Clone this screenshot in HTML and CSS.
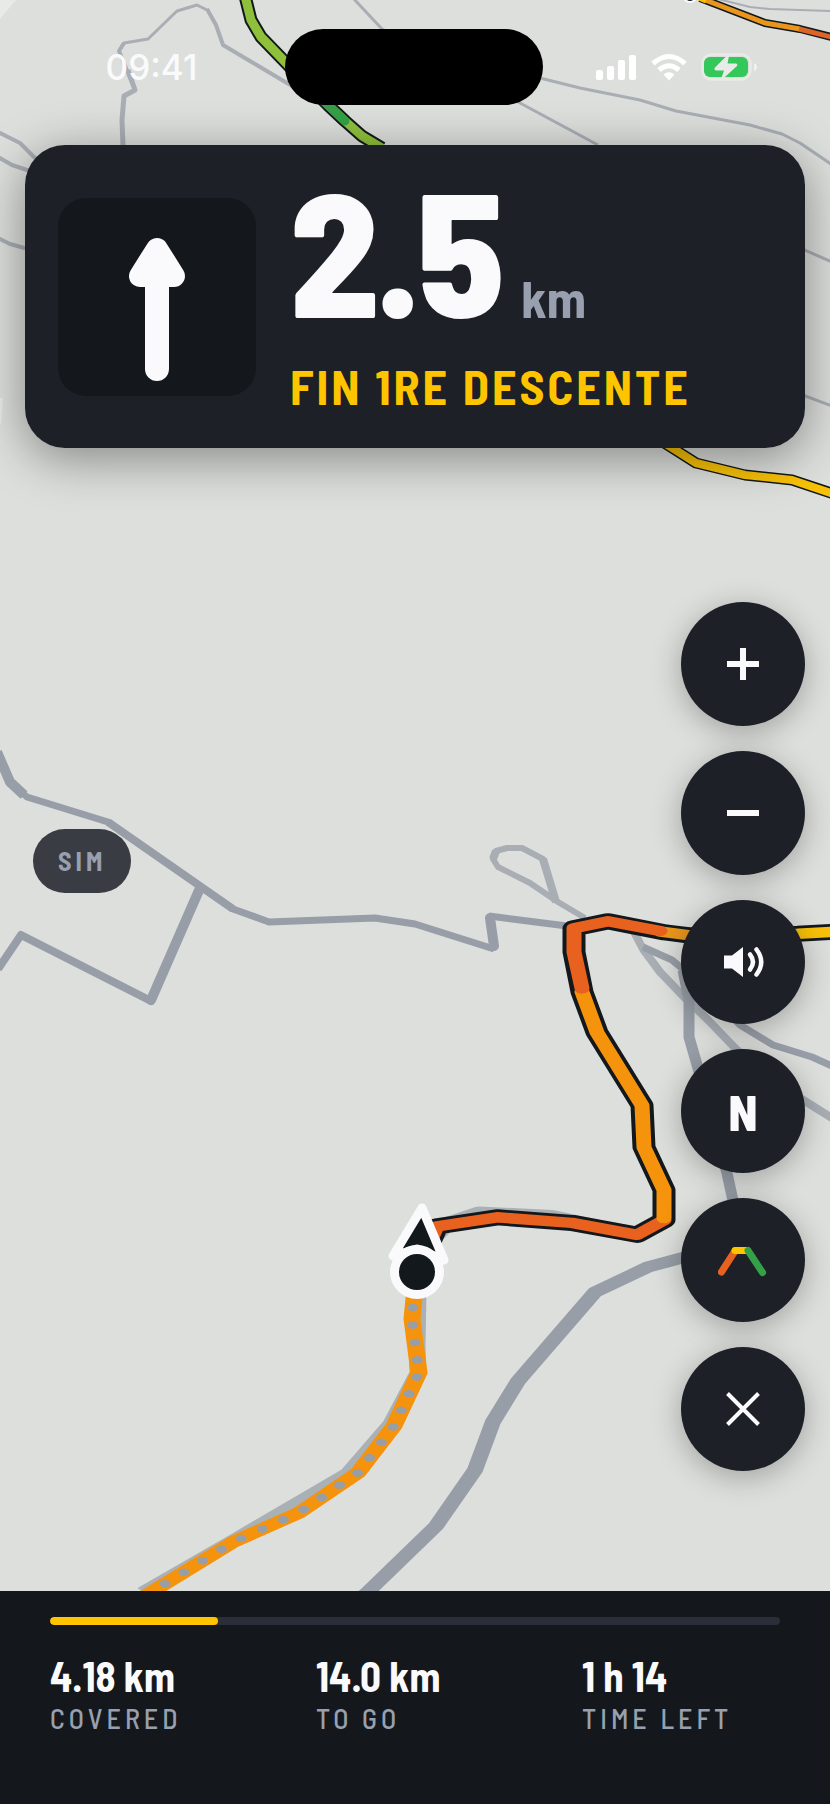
FILE: index.html
```html
<!DOCTYPE html>
<html lang="en">
<head>
<meta charset="utf-8">
<meta name="viewport" content="width=device-width, initial-scale=1">
<title>Navigation</title>
<link rel="stylesheet" href="styles.css">
</head>
<body>
<main class="screen">
  <section class="stage">
    <svg class="map" viewBox="0 0 830 1591" preserveAspectRatio="xMidYMax slice" aria-hidden="true">
      <path class="haze" d="M0 0H16L0 19ZM0 398L3 398L1 424L0 424Z"/>
      <g class="road road-light">
        <path stroke-width="5" d="M123 146L122 120L124 96L135 90L128 70"/>
        <path stroke-width="4" d="M135 90L119 51L124 43"/>
        <path stroke-width="3" d="M119 51L124 43L148 39L177 11L197 5L209 11"/>
        <path stroke-width="4" d="M207 9L216 25L223 45L292 86"/>
        <path stroke-width="3" d="M353 -2L382 29L520 103L598 145M540 78L580 88L640 100L676 111L750 125L782 134L800 143L831 164"/>
        <path stroke-width="2" d="M718 -1L750 7L770 9L830 11"/>
        <path stroke-width="4" d="M-2 132L20 143L36 159M-2 157L12 165L30 171M-2 238L10 244L28 249"/>
        <path stroke-width="3" d="M800 248L832 262M800 394L832 406"/>
        <path stroke-width="6" d="M585 918L558 902L530 883L498 867L493 859L496 851L507 848L522 848L543 859L556 902"/>
        <path stroke-width="8" d="M493 859L496 851M543 859L556 902"/>
        <path stroke-width="8" d="M632 928L643 949L660 972L685 998L708 1020L737 1050L800 1098L832 1118"/>
      </g>
      <g class="road">
        <path stroke-width="10" d="M-3 752L10 782L24 795"/>
        <path stroke-width="7" d="M10 782L27 797L108 822L233 909L269 922L375 918L415 924L494 949"/>
        <path stroke-width="8" d="M108 822L233 909M200 888L151 1001L21 935L-2 969"/>
        <path stroke-width="10" stroke-linecap="round" d="M200 888L151 1000M494 946L490 918"/>
        <path stroke-width="7" d="M489 916L575 927M643 947L672 960L684 970L740 1025L773 1045L812 1057L832 1066"/>
        <path stroke-width="11" d="M683 970L689 1000L689 1037L710 1110L727 1173L735 1210"/>
      </g>
      <!-- the ground plane is tilted, so strokes are flattened vertically -->
      <g class="tilt" transform="scale(1 .7)">
        <path class="road" stroke-width="16" d="M690 1794L648 1810L595 1846L518 1973L493 2031L475 2100L436 2180L368 2274L350 2295"/>
        <path class="road road-pale" stroke-width="17" d="M418 1840L417 1925L418 1961L391 2034L348 2105L233 2201L143 2275"/>
        <path class="road road-pale" stroke-width="17" d="M430 1774L450 1746L479 1732L552 1737L600 1752"/>
        <path class="covered" d="M415 1840L412 1884L419 1961L394 2037L358 2104L299 2161L233 2203L152 2274L120 2303"/>
        <path class="dots" d="M413 1868L412 1884L419 1961L394 2037L358 2104L299 2161L233 2203L152 2274L120 2303"/>
        <path class="casing" d="M425 1790L437 1752L497 1739L572 1747L637 1764L664 1743L664 1700L644 1639L642 1579L597 1475L582 1417L574 1360L574 1326L608 1316L665 1332L688 1336L798 1334L835 1331"/>
        <path class="ride red" d="M425 1790L437 1752L497 1739L572 1747L637 1764L664 1743"/>
        <path class="ride orange" d="M664 1740L664 1700L644 1639L642 1579L597 1475L582 1417"/>
        <path class="ride amber" d="M661 1331L688 1336L740 1336"/>
        <path class="ride yellow" d="M740 1336L798 1334L835 1331"/>
        <path class="ride red" d="M582 1412L574 1360L574 1326L608 1316L660 1330"/>
      </g>
      <g class="far">
        <path class="edge" stroke-width="13" d="M245 -4L251 20L261 37L292 69L328 105L345 121L362 136L382 148"/>
        <path class="lime" stroke-width="9" d="M245 -4L251 20L261 37L292 69L328 105L345 121L362 136L382 148"/>
        <path class="green" stroke-width="9" d="M296 73L328 105L345 121"/>
        <path class="edge" stroke-width="11" d="M655 437L696 463L745 475L792 480L834 494"/>
        <path class="yellow" stroke-width="8" d="M655 437L696 463L745 475L792 480L834 494"/>
        <path class="edge" stroke-width="8" d="M700 -2L765 23L800 29L835 38"/>
        <path class="amber" stroke-width="5" d="M700 -2L765 23L800 29"/>
        <path class="yellow" stroke-width="5" d="M699 -2L706 1"/>
        <path class="rust" stroke-width="5" d="M799 29L835 38"/>
      </g>
      <circle class="marker-ring" cx="690" cy="-5" r="8"/>
      <circle class="marker-core" cx="690" cy="-4" r="5"/>
      <path class="heading" d="M422 1208L393 1256L417 1249L444 1260Z"/>
      <circle class="marker-ring" cx="417" cy="1272" r="27"/>
      <circle class="marker-core" cx="417" cy="1272" r="18"/>
    </svg>

    <header class="status">
      <time class="clock">09:41</time>
      <span class="island"></span>
      <span class="indicators">
        <svg width="41" height="28" viewBox="0 0 41 28" role="img" aria-label="Signal"><g fill="#fff"><rect x="0" y="17" width="7" height="10" rx="2"/><rect x="11" y="13" width="7" height="14" rx="2"/><rect x="22" y="7" width="7" height="20" rx="2"/><rect x="33" y="2" width="7" height="25" rx="2"/></g></svg>
        <svg width="36" height="28" viewBox="0 0 36 28" role="img" aria-label="Wi-Fi"><g fill="none" stroke="#fff" stroke-width="5"><path d="M2 10.500Q18 -3.500 34 10.500"/><path d="M8 17Q18 8.500 28 17"/></g><path fill="#fff" d="M12.500 21.500Q18 17 23.500 21.500L18 27.500Z"/></svg>
        <svg width="56" height="28" viewBox="0 0 56 28" role="img" aria-label="Battery charging"><rect x="1.500" y="1.500" width="48" height="25" rx="9" fill="none" stroke="#e9ebe8" stroke-width="2.500"/><rect x="3" y="4" width="44" height="20" rx="6" fill="#34c759"/><path d="M53 10Q56 11 56 14Q56 17 53 18Z" fill="#f0f2ef"/><path d="M28.500 0L13.500 15Q13 17 15 17.500H23L19.500 28L36 13Q37 11 35 10.500H26.500Z" fill="#e9ebe8"/></svg>
      </span>
    </header>

    <section class="turn">
      <span class="turn-tile">
        <svg viewBox="0 0 198 198" role="img" aria-label="Continue straight"><path d="M99 51L82 78H116Z" fill="#fafafc" stroke="#fafafc" stroke-width="22" stroke-linejoin="round"/><path d="M99 70V171" stroke="#fafafc" stroke-width="24" stroke-linecap="round"/></svg>
      </span>
      <div class="turn-text">
        <p class="distance"><strong>2.5</strong><span>km</span></p>
        <h1 class="instruction">FIN 1RE DESCENTE</h1>
      </div>
    </section>

    <div class="tools">
      <span class="sim">SIM</span>
      <nav class="controls" aria-label="Map controls">
        <button type="button" aria-label="Zoom in"><svg viewBox="0 0 50 50"><path d="M9 25H41M25 9V41" stroke="#fafafc" stroke-width="6"/></svg></button>
        <button type="button" aria-label="Zoom out"><svg viewBox="0 0 50 50"><path d="M9 25H41" stroke="#fafafc" stroke-width="6"/></svg></button>
        <button type="button" aria-label="Sound"><svg viewBox="0 0 50 50"><path d="M6 18.500H14L25 10V40L14 31.500H6Z" fill="#fafafc"/><g fill="none" stroke="#fafafc" stroke-width="4.500" stroke-linecap="round"><path d="M32 17.500Q38 25 32 32.500"/><path d="M38.500 12.500Q48 25 38.500 37.500"/></g></svg></button>
        <button type="button">N</button>
        <button type="button" aria-label="Slope colours"><svg viewBox="0 0 50 50" fill="none" stroke-width="7" stroke-linecap="round"><path d="M3.500 37L17 16" stroke="#e8611e"/><path d="M17 15.500H29" stroke="#ffc400"/><path d="M30 15.500L44.500 37.500" stroke="#34a047"/></svg></button>
        <button type="button" aria-label="Close"><svg viewBox="0 0 50 50"><path d="M9.500 9.500L40.500 40.500M40.500 9.500L9.500 40.500" stroke="#fafafc" stroke-width="4"/></svg></button>
      </nav>
    </div>
  </section>

  <footer class="trip">
    <progress value="23" max="100" aria-label="Route covered"></progress>
    <dl class="stats">
      <div><dt>COVERED</dt><dd>4.18 km</dd></div>
      <div><dt>TO GO</dt><dd>14.0 km</dd></div>
      <div><dt>TIME LEFT</dt><dd>1 h 14</dd></div>
    </dl>
  </footer>
</main>
</body>
</html>
```
FILE: styles.css
```css
:root {
  --ink: #14181c;
  --panel: #1e2028;
  --text: #fafafc;
  --muted: #98a0af;
  --yellow: #ffc400;
  --land: #dddfdc;
  --road: #989ea7;
}
* { box-sizing: border-box; }
body {
  margin: 0;
  background: var(--ink);
  color: var(--text);
  font-family: "Barlow Semi Condensed", "Barlow Condensed", Roboto, sans-serif;
}
p, h1, dl, dd { margin: 0; }

.screen { display: flex; flex-direction: column; min-height: 100vh; }
.stage {
  position: relative;
  isolation: isolate;
  flex: 1;
  display: flex;
  flex-direction: column;
  overflow: hidden;
  background: var(--land);
}

.map { position: absolute; inset: 0; z-index: -1; width: 100%; height: 100%; }
.map path { stroke-linejoin: round; }
.map .haze { fill: #e8eae8; }
.road { fill: none; stroke: var(--road); }
.road-light { stroke: #a8aeb4; }
.road-pale { stroke: #aab1b6; }
.covered { fill: none; stroke: #f5940c; stroke-width: 17; }
.dots { fill: none; stroke: #989ea7; stroke-width: 11; stroke-linecap: round; stroke-dasharray: 0 25; }
.casing { fill: none; stroke: #12181b; stroke-width: 23; }
.ride { fill: none; stroke-width: 15; stroke-linecap: round; }
.far path { fill: none; }
.edge { stroke: #12181b; }
.red { stroke: #e8611e; }
.rust { stroke: #dc6428; }
.orange { stroke: #f5940c; }
.amber { stroke: #ea961c; }
.yellow { stroke: #f8c108; }
.lime { stroke: #8fc03c; }
.green { stroke: #34a047; stroke-linecap: round; }
.marker-ring { fill: var(--text); }
.marker-core { fill: #12181b; }
.heading { fill: #12181b; stroke: var(--text); stroke-width: 9; }

.status {
  display: grid;
  grid-template-columns: 1fr 258px 1fr;
  align-items: center;
  padding: 29px 20px 0 18px;
}
.clock { justify-self: center; font: 500 35px/40px Inter, sans-serif; }
.island { height: 76px; border-radius: 38px; background: #000; }
.indicators { display: flex; gap: 14px; justify-self: center; }

.turn {
  display: flex;
  align-items: center;
  gap: 34px;
  min-height: 303px;
  margin: 40px 25px 0;
  padding: 20px 33px;
  border-radius: 40px;
  background: var(--panel);
  box-shadow: 0 10px 50px rgba(0, 0, 0, .4);
}
.turn-tile { flex: none; width: 198px; height: 198px; border-radius: 28px; background: var(--ink); }
.turn-tile svg { display: block; }
.turn-text { padding-bottom: 12px; }
.distance { display: flex; align-items: baseline; gap: 20px; }
.distance strong { font-size: 175px; line-height: 160px; font-weight: 800; letter-spacing: -3px; }
.distance span { color: var(--muted); font-size: 52px; line-height: 60px; font-weight: 700; }
.instruction {
  margin-top: 30px;
  color: var(--yellow);
  font-size: 48px;
  line-height: 56px;
  font-weight: 700;
  letter-spacing: 3px;
}

.tools { flex: 1; display: flex; justify-content: space-between; padding: 0 25px 0 33px; }
.sim {
  align-self: flex-start;
  margin-top: 381px;
  padding: 0 25px;
  border-radius: 32px;
  background: #3a3c44;
  color: var(--muted);
  font-size: 26px;
  line-height: 64px;
  font-weight: 700;
  letter-spacing: 4px;
}
.controls { display: flex; flex-direction: column; justify-content: flex-end; gap: 25px; padding-bottom: 120px; }
.controls button {
  display: grid;
  place-items: center;
  width: 124px;
  height: 124px;
  padding: 0;
  border: 0;
  border-radius: 50%;
  background: var(--panel);
  color: var(--text);
  font: inherit;
  font-size: 49px;
  font-weight: 800;
  box-shadow: 0 6px 30px rgba(0, 0, 0, .28);
}
.controls svg { width: 50px; height: 50px; }

.trip { padding: 26px 50px 70px; background: var(--ink); }
progress {
  display: block;
  width: 100%;
  height: 8px;
  border: 0;
  border-radius: 4px;
  overflow: hidden;
  appearance: none;
  background: #2b2d38;
}
progress::-webkit-progress-bar { background: #2b2d38; }
progress::-webkit-progress-value { border-radius: 4px; background: var(--yellow); }
.stats { display: grid; grid-template-columns: repeat(3, 1fr); gap: 68px; margin-top: 27px; }
.stats div { display: flex; flex-direction: column-reverse; gap: 2px; white-space: nowrap; }
.stats dd { font-size: 41px; line-height: 48px; font-weight: 700; }
.stats dt { color: var(--muted); font-size: 28px; line-height: 32px; font-weight: 500; letter-spacing: 4px; }
```
